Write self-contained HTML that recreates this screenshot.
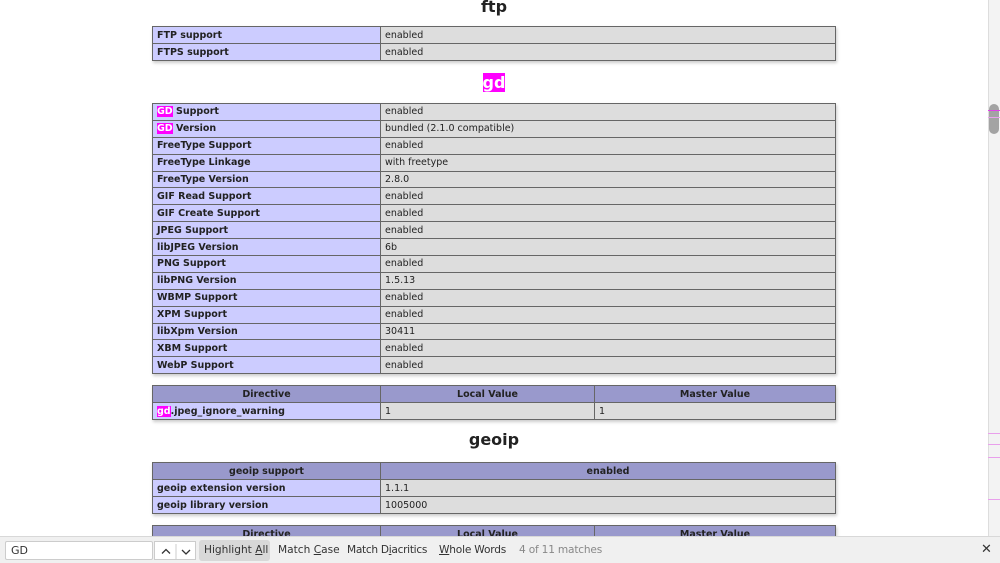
<!DOCTYPE html>
<html><head><meta charset="utf-8"><style>
*{margin:0;padding:0;box-sizing:border-box}
body{width:1000px;height:563px;overflow:hidden;background:#fff;font-family:"DejaVu Sans","Liberation Sans",sans-serif;position:relative;color:#222}
table{position:absolute;left:152px;width:684px;border-collapse:collapse;font-size:9.5px;box-shadow:1px 2px 3px #ccc}
td,th{border:1px solid #666;height:17px;padding:0 4px;vertical-align:middle;white-space:nowrap}
.g td{height:16.9px}
.e{background:#ccf;font-weight:bold;width:228px}
.v{background:#ddd}
th{background:#99c;font-weight:bold;text-align:center}
h2{position:absolute;left:0;width:988px;text-align:center;font-size:16px;font-weight:bold}
.m{background:#f0f;color:#fff}
.sb{position:absolute;left:988px;top:0;width:12px;height:536px;background:#f3f3f3;border-left:1px solid #ddd}
.th{position:absolute;left:989px;top:104px;width:10px;height:30px;background:#a3a3a3;border-radius:5px}
.mk{position:absolute;left:988px;width:12px;height:1px;background:#e9a0ec}
.fb{position:absolute;left:0;top:536px;width:1000px;height:27px;background:#f0f0f0;border-top:1px solid #d8d8d8;font-size:10.6px;color:#333;font-family:"DejaVu Sans",sans-serif}
.fb span{position:absolute;top:7px;white-space:nowrap}
</style></head><body>
<h2 style="top:-3px">ftp</h2>
<table style="top:26px"><tr><td class="e">FTP support</td><td class="v">enabled</td></tr><tr><td class="e">FTPS support</td><td class="v">enabled</td></tr></table>
<h2 style="top:73px"><span class="m">gd</span></h2>
<table class="g" style="top:103px">
<tr><td class="e"><span class="m">GD</span> Support</td><td class="v">enabled</td></tr>
<tr><td class="e"><span class="m">GD</span> Version</td><td class="v">bundled (2.1.0 compatible)</td></tr>
<tr><td class="e">FreeType Support</td><td class="v">enabled</td></tr>
<tr><td class="e">FreeType Linkage</td><td class="v">with freetype</td></tr>
<tr><td class="e">FreeType Version</td><td class="v">2.8.0</td></tr>
<tr><td class="e">GIF Read Support</td><td class="v">enabled</td></tr>
<tr><td class="e">GIF Create Support</td><td class="v">enabled</td></tr>
<tr><td class="e">JPEG Support</td><td class="v">enabled</td></tr>
<tr><td class="e">libJPEG Version</td><td class="v">6b</td></tr>
<tr><td class="e">PNG Support</td><td class="v">enabled</td></tr>
<tr><td class="e">libPNG Version</td><td class="v">1.5.13</td></tr>
<tr><td class="e">WBMP Support</td><td class="v">enabled</td></tr>
<tr><td class="e">XPM Support</td><td class="v">enabled</td></tr>
<tr><td class="e">libXpm Version</td><td class="v">30411</td></tr>
<tr><td class="e">XBM Support</td><td class="v">enabled</td></tr>
<tr><td class="e">WebP Support</td><td class="v">enabled</td></tr>
</table>
<table style="top:385px"><tr><th style="width:228px">Directive</th><th style="width:214px">Local Value</th><th>Master Value</th></tr>
<tr><td class="e"><span class="m">gd</span>.jpeg_ignore_warning</td><td class="v">1</td><td class="v">1</td></tr></table>
<h2 style="top:430px">geoip</h2>
<table style="top:462px"><tr><th style="width:228px">geoip support</th><th>enabled</th></tr>
<tr><td class="e">geoip extension version</td><td class="v">1.1.1</td></tr>
<tr><td class="e">geoip library version</td><td class="v">1005000</td></tr></table>
<table style="top:525px"><tr><th style="width:228px">Directive</th><th style="width:214px">Local Value</th><th>Master Value</th></tr></table>
<div class="sb"></div><div class="th"></div>
<div class="mk" style="top:110px;background:#e040e8"></div><div class="mk" style="top:117px"></div>
<div class="mk" style="top:433px"></div><div class="mk" style="top:444px"></div><div class="mk" style="top:457px"></div><div class="mk" style="top:499px"></div>
<div class="fb">
<div style="position:absolute;left:5px;top:4px;width:148px;height:19px;background:#fff;border:1px solid #ccc;border-radius:2px;padding:2px 5px;font-size:11px">GD</div>
<div style="position:absolute;left:154px;top:4px;width:42px;height:19px;background:#fff;border:1px solid #ccc">
<svg width="42" height="19" style="position:absolute;left:0;top:0"><path d="M7 11.5l4-4 4 4" fill="none" stroke="#333" stroke-width="1.3"/><line x1="21" y1="2" x2="21" y2="17" stroke="#ccc"/><path d="M27 8l4 4 4-4" fill="none" stroke="#333" stroke-width="1.3"/></svg></div>
<div style="position:absolute;left:199px;top:3px;width:71px;height:21px;background:#d8d8d8;border-radius:3px"></div>
<span style="left:204px">Highlight <u>A</u>ll</span>
<span style="left:278px">Match <u>C</u>ase</span>
<span style="left:347px;letter-spacing:-0.3px">Match D<u>i</u>acritics</span>
<span style="left:439px;letter-spacing:-0.2px"><u>W</u>hole Words</span>
<span style="left:519px;color:#888;letter-spacing:-0.2px">4 of 11 matches</span>
<span style="left:981px;font-size:13px;top:5px">✕</span>
</div>
</body></html>
